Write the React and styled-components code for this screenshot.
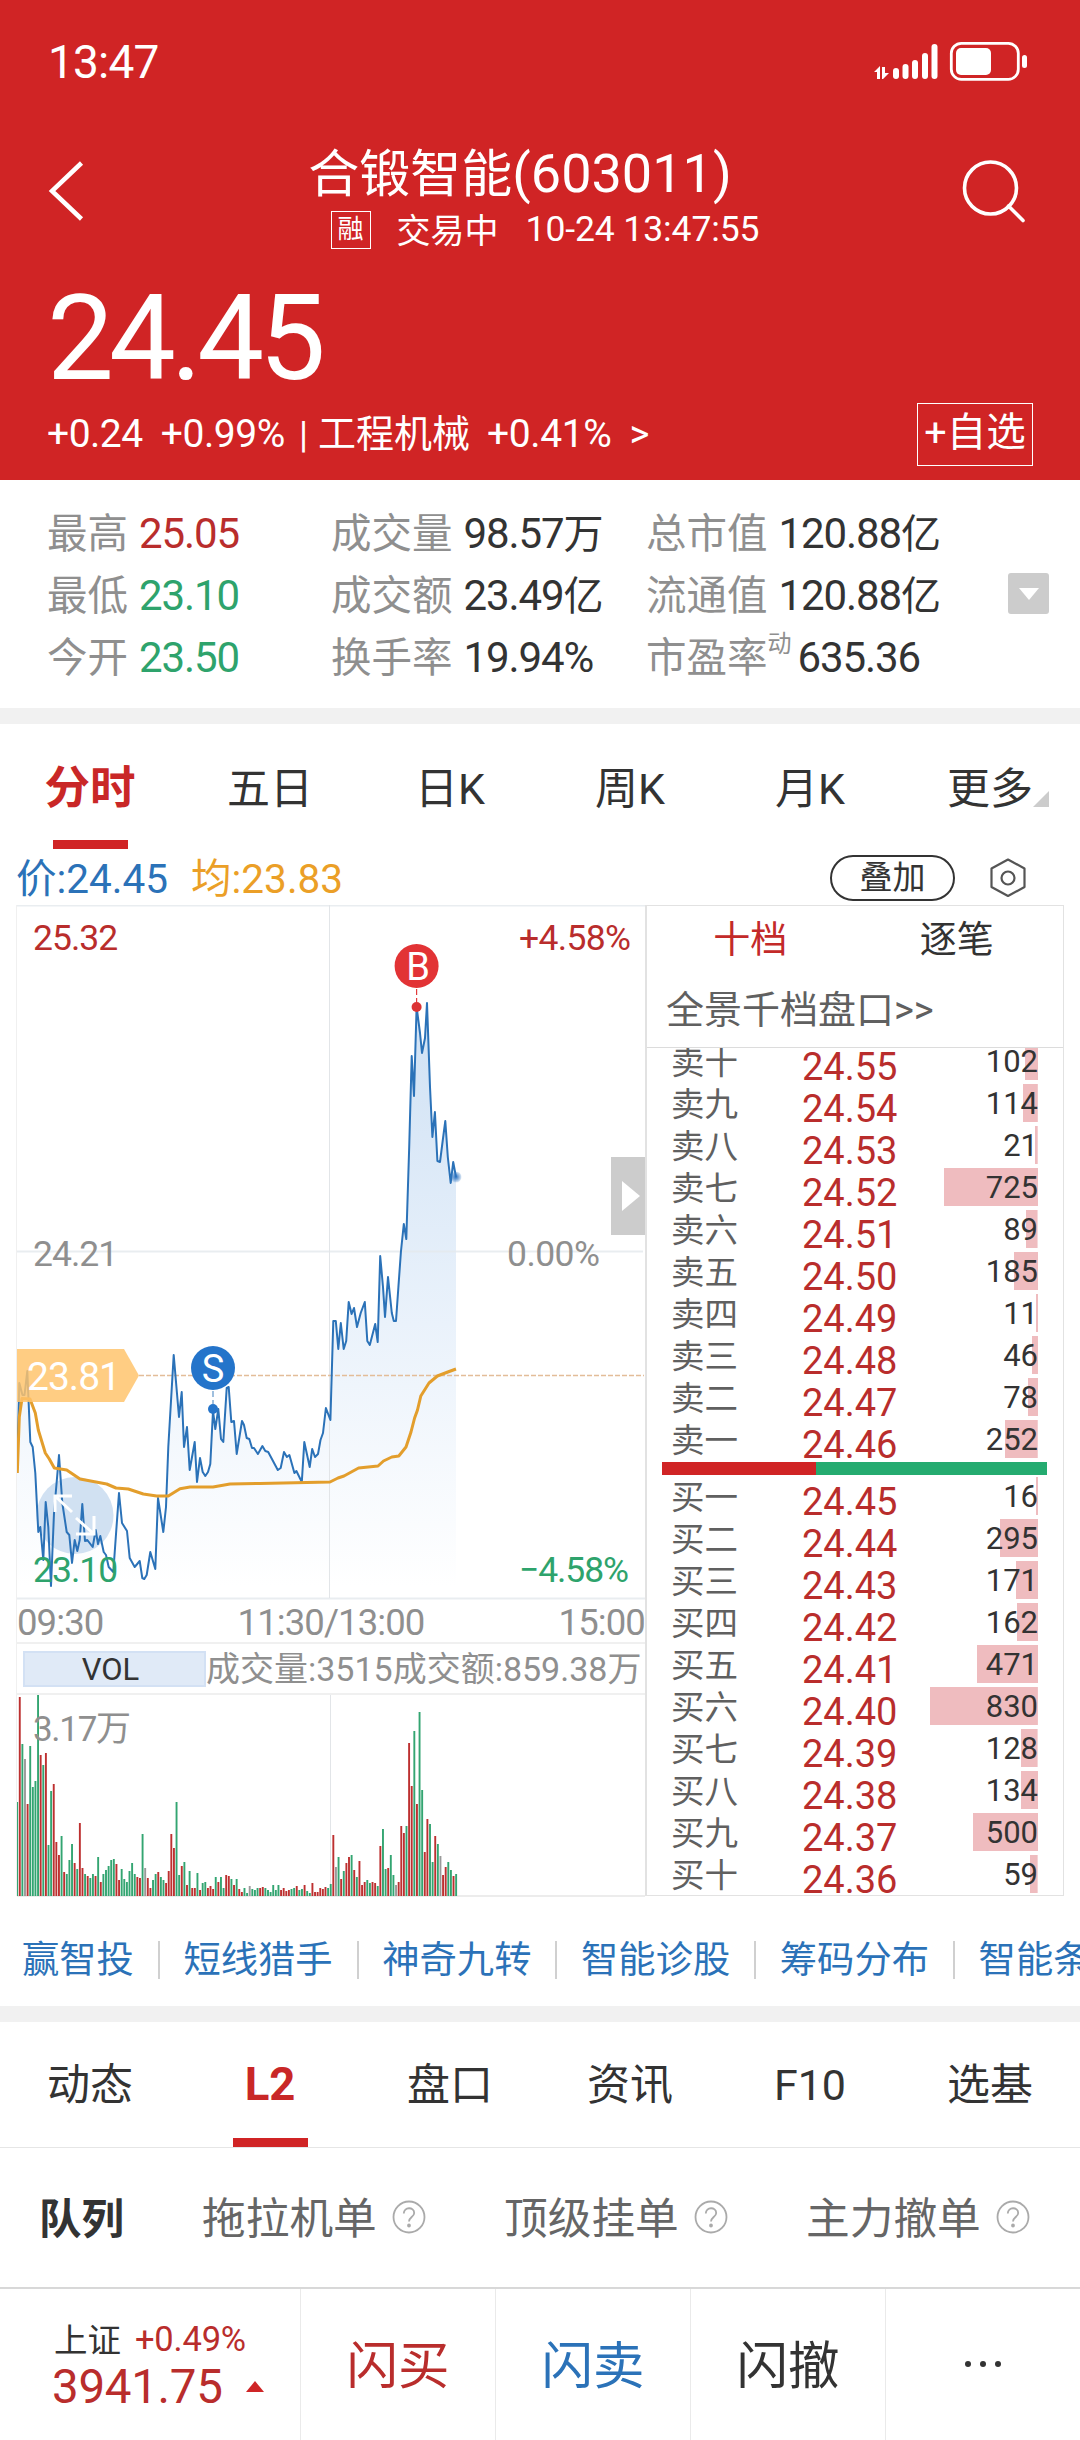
import React from "react";
import styled, { createGlobalStyle } from "styled-components";

const RED = "#d02425";
const TEXT_RED = "#b92d2c";
const GREEN = "#2ea36c";
const BLUE = "#2b72b8";
const GREY = "#8f8f8f";
const DARK = "#333333";

const GlobalStyle = createGlobalStyle`
  * {
    box-sizing: border-box;
  }
  body {
    margin: 0;
    background: #fff;
    font-family: Roboto, "Noto Sans CJK SC", sans-serif;
    color: ${DARK};
  }
  svg {
    display: block;
  }
`;

const Page = styled.div`
  width: 1080px;
  height: 2440px;
  overflow: hidden;
  background: #fff;
  white-space: nowrap;
`;

const Num = styled.span`
  font-size: ${(p) => p.$size}px;
  letter-spacing: ${(p) => p.$ls || 0}px;
  color: ${(p) => p.$color || "inherit"};
  margin-left: ${(p) => p.$ml || 0}px;
  padding-bottom: ${(p) => p.$lift || 0}px;
`;

/* ---------- header ---------- */

const Header = styled.header`
  height: 480px;
  background: ${RED};
  color: #fff;
  display: flex;
  flex-direction: column;
`;

const StatusBar = styled.div`
  height: 124px;
  padding: 0 52px 1px 48px;
  display: flex;
  align-items: center;
  justify-content: space-between;
`;

const Clock = styled.span`
  font-size: 46px;
  letter-spacing: -0.8px;
`;

const TitleBar = styled.div`
  height: 138px;
  padding: 11px 54px 0 48px;
  display: flex;
  justify-content: space-between;
  align-items: flex-start;
`;

const TitleBlock = styled.div`
  display: flex;
  flex-direction: column;
  align-items: center;
  padding-right: 6px;
`;

const Title = styled.div`
  height: 72px;
  line-height: 77px;
  font-size: 51px;
`;

const SubTitle = styled.div`
  height: 46px;
  display: flex;
  align-items: center;
  padding-left: 50px;
`;

const MarginTag = styled.span`
  width: 40px;
  height: 38px;
  border: 1px solid #fff;
  font-size: 26px;
  line-height: 34px;
  text-align: center;
`;

const IconSlot = styled.div`
  padding-top: ${(p) => p.$top}px;
`;

const BigPrice = styled.div`
  height: 138px;
  line-height: 154px;
  padding-left: 47px;
  font-size: 119px;
  letter-spacing: -5px;
`;

const ChangeRow = styled.div`
  height: 68px;
  padding: 0 47px 0 47px;
  display: flex;
  align-items: center;
  justify-content: space-between;
`;

const ChangeText = styled.div`
  display: flex;
  align-items: center;
  font-size: 38px;
`;

const AddButton = styled.div`
  width: 116px;
  height: 63px;
  border: 1px solid #fff;
  font-size: 39.5px;
  line-height: 58px;
  text-align: center;
`;

/* ---------- quote table ---------- */

const Quote = styled.section`
  height: 228px;
  padding: 22px 31px 18px 47px;
  display: flex;
  align-items: flex-start;
`;

const QuoteColumn = styled.div`
  width: ${(p) => p.$w}px;
`;

const QuoteRow = styled.div`
  height: 62px;
  display: flex;
  align-items: center;
  font-size: 40px;
  color: ${DARK};
`;

const QuoteLabel = styled.span`
  color: ${GREY};
  font-size: 40.5px;
  margin-right: 11px;
  padding-bottom: 5px;
`;

const Sup = styled.sup`
  font-size: 24px;
  line-height: 0;
  vertical-align: 20px;
  margin-right: -5px;
`;

const Unit = styled.span`
  padding-bottom: 4px;
`;

const Expand = styled.div`
  width: 41px;
  height: 41px;
  border-radius: 3px;
  background: #ccc;
  margin: 71px 0 0 auto;
  display: flex;
  align-items: center;
  justify-content: center;
`;

const Gap = styled.div`
  height: 16px;
  background: #f1f1f1;
`;

/* ---------- tabs ---------- */

const Tabs = styled.nav`
  height: ${(p) => p.$h}px;
  display: grid;
  grid-template-columns: repeat(6, 180px);
  border-bottom: ${(p) => (p.$line ? "1px solid #e6e6e6" : "none")};
`;

const Tab = styled.div`
  display: flex;
  flex-direction: column;
  align-items: center;
  justify-content: space-between;
  padding-top: ${(p) => p.$top}px;
  font-size: ${(p) => (p.$active ? 45.5 : 43)}px;
  line-height: 60px;
  font-weight: ${(p) => (p.$active ? 700 : 400)};
  color: ${(p) => (p.$active ? "#c92727" : DARK)};

  &::after {
    content: "";
    width: 75px;
    height: 9px;
    background: ${(p) => (p.$active ? RED : "transparent")};
  }
`;

const MoreLabel = styled.span`
  position: relative;
`;

const MoreCorner = styled.svg`
  position: absolute;
  right: -16px;
  bottom: 12px;
`;

/* ---------- chart area ---------- */

const InfoRow = styled.div`
  height: 56px;
  padding: 2px 54px 0 16px;
  display: flex;
  align-items: center;
  font-size: 40.5px;
  color: ${BLUE};
`;

const Current = styled.span`
  padding-bottom: 5px;
`;

const Average = styled.span`
  color: #eb9f27;
  margin-left: 23px;
  padding-bottom: 5px;
`;

const Overlay = styled.div`
  width: 125px;
  height: 46px;
  margin: 0 35px 0 auto;
  border: 2px solid ${DARK};
  border-radius: 23px;
  font-size: 33px;
  line-height: 41px;
  text-align: center;
  color: ${DARK};
`;

const Board = styled.section`
  height: 991px;
  padding: 0 15px 0 16px;
  display: flex;
`;

const ChartSide = styled.div`
  width: 629px;
  border-left: 1px solid #f0f0f0;
`;

const Axis = styled.div`
  height: 44px;
  display: flex;
  justify-content: space-between;
  align-items: center;
  font-size: 36.5px;
  letter-spacing: -0.9px;
  color: ${GREY};
  padding-top: 3px;
  border-bottom: 2px solid #f0f0f0;
`;

const VolumeHead = styled.div`
  height: 51px;
  padding: 0 0 0 6px;
  display: flex;
  align-items: center;
  border-bottom: 2px solid #f0f0f0;
  font-size: 34px;
  color: ${GREY};
`;

const VolTag = styled.div`
  width: 183px;
  height: 36px;
  flex: none;
  background: #e0eaf7;
  border: 2px solid #d3e1f4;
  font-size: 31px;
  line-height: 33px;
  text-align: center;
  color: ${DARK};
  padding-right: 8px;
`;

const VolumeText = styled.span`
  padding-bottom: 4px;
`;

/* ---------- order book ---------- */

const Book = styled.div`
  width: 419px;
  height: 991px;
  border: 1px solid #e2e2e2;
  border-width: 1px 1px 1px 2px;
  overflow: hidden;
`;

const BookTabs = styled.div`
  height: 70px;
  padding-right: 3px;
  display: grid;
  grid-template-columns: 1fr 1fr;
  text-align: center;
  font-size: 37px;
  line-height: 70px;
`;

const BookTab = styled.span`
  color: ${(p) => (p.$active ? "#c32a29" : DARK)};
`;

const Panorama = styled.div`
  height: 72px;
  padding-left: 19px;
  font-size: 38px;
  line-height: 68px;
  color: #606060;
  border-bottom: 1px solid #dcdcdc;
`;

const Ladder = styled.div`
  height: ${(p) => p.$h}px;
  overflow: hidden;
  display: flex;
  flex-direction: column;
  justify-content: ${(p) => (p.$toEnd ? "flex-end" : "flex-start")};
  padding-top: ${(p) => (p.$toEnd ? 0 : 2)}px;
`;

const Level = styled.div`
  height: 42px;
  flex: none;
  padding: 0 25px 0 24px;
  display: grid;
  grid-template-columns: 131px 110px 1fr;
  grid-template-rows: 42px;
  align-items: start;
`;

const LevelName = styled.span`
  font-size: 33.5px;
  line-height: 42px;
  color: #606060;
`;

const LevelPrice = styled.span`
  font-size: 38px;
  line-height: 51px;
  color: ${TEXT_RED};
`;

const LevelVolume = styled.span`
  height: 38px;
  text-align: right;
  font-size: 31px;
  line-height: 39px;
  background: linear-gradient(#efbcbf, #efbcbf) no-repeat right top;
`;

const Ratio = styled.div`
  height: 13px;
  margin: 0 16px 0 15px;
  background: linear-gradient(90deg, ${RED} 40%, #25ab70 40%);
`;

/* ---------- lower part ---------- */

const Links = styled.div`
  height: 110px;
  padding: 18px 0 0 22px;
  display: flex;
  align-items: center;
  overflow: hidden;
  font-size: 37.3px;
  color: ${BLUE};
`;

const Link = styled.span`
  flex: none;
  line-height: 38px;
  padding-right: 24px;
  margin-right: 23.6px;
  border-right: 2px solid #d0d0d0;
`;

const SubTabs = styled.div`
  height: 139px;
  padding: 0 0 5px 39px;
  display: flex;
  align-items: center;
`;

const SubTab = styled.div`
  display: flex;
  align-items: center;
  width: ${(p) => p.$w}px;
  flex: none;
  font-weight: ${(p) => (p.$active ? 700 : 400)};
  font-size: ${(p) => (p.$active ? 42.5 : 43.7)}px;
  color: ${(p) => (p.$active ? DARK : "#666")};

  svg {
    margin: 4px 0 0 15px;
  }
`;

const Footer = styled.footer`
  height: 153px;
  border-top: 2px solid #d8d8d8;
  display: grid;
  grid-template-columns: 301px repeat(3, 195px) 1fr;
`;

const FooterCell = styled.div`
  display: flex;
  align-items: center;
  justify-content: center;
  padding-bottom: 7px;
  font-size: 51.5px;
  color: ${(p) => p.$color};
  border-right: 1px solid #eaeaea;

  &:last-child {
    border-right: none;
  }

  svg {
    margin-top: 6px;
  }
`;

const IndexCell = styled.div`
  padding: 26px 0 0 52px;
  border-right: 1px solid #eaeaea;
`;

const IndexRow = styled.div`
  height: 48px;
  display: flex;
  align-items: center;
  font-size: 33.5px;
`;

const IndexName = styled.span`
  padding: 0 0 3px 2px;
`;

/* price line, one vertex per minute or turning point */
const PRICE =
  "17,1473 19.3,1383 22.5,1395 24.5,1395 27.3,1371 30.3,1442 32.7,1447 35.3,1473 38.3,1532 40.3,1527 43.3,1560 45.7,1502 48.3,1527 51,1586 54,1513 59,1455 62.3,1503 66.7,1532 69.3,1535 72,1563 74.7,1540 77.3,1551 79.7,1540 82.3,1504 85,1541 87.3,1540 92.7,1547 95.7,1530 98,1544 100.3,1536 103.7,1552 106,1555 108.7,1567 113.3,1572 116.3,1530 119,1493 122,1523 127,1531 129.7,1558 134.7,1567 139.7,1561 142.3,1578 144.3,1579 146.7,1575 150.3,1552 155.3,1569 158,1498 163.3,1532 166,1507 168.3,1447 173.7,1355 179,1417 181.7,1392 184,1447 187,1427 189.7,1470 194.7,1442 197,1482 200,1458 202.7,1472 205.3,1476 208,1472 210.3,1464 213,1411 215.3,1429 218.3,1409 221,1439 223.3,1442 226.7,1388 228.7,1387 231.3,1422 234,1421 236.7,1454 242,1421 244,1425 246.7,1438 249.3,1439 252,1448 254,1448 257.9,1454 262.4,1446 265.3,1451 268.2,1452 277.8,1470 280.7,1468 284,1452 286.9,1457 289.4,1455 294.4,1473 296.4,1471 301.8,1482 304.3,1442 309.7,1467 312.2,1449 315,1457 318,1454 320.5,1440 323,1433 325.9,1408 330.4,1420 333.3,1321 335.8,1321 338.3,1349 340.8,1323 343.7,1349 346.2,1341 348.7,1302 351.6,1314 354,1308 357,1327 360.7,1313 364.8,1302 367.3,1341 369.8,1345 375.2,1324 377.7,1342 380.2,1256 383,1287 385,1317 388,1277 391.8,1313 393.8,1321 396,1321 398.4,1287 400.9,1252 403.8,1224 406.3,1239 409.2,1147 411.7,1056 414,1096 416.6,1007 420,1033 422,1053 425,1038 427,1003 430,1087 432.4,1137 434.9,1112 437.4,1161 440,1162 442.8,1140 445.3,1121 447.8,1157 450.7,1183 453.2,1162 456,1177";

const AVERAGE =
  "17.3,1473 19.3,1417 22,1398.5 30,1399 35.3,1413 38.3,1430 45.3,1453 49.3,1459 54.3,1468 66.7,1470 80,1479 106.7,1484 116,1488 128.3,1489 143.3,1494 156.7,1496 168.3,1496 180,1488.7 190,1487 213,1487 230,1484 260,1483.5 330,1482 338,1478 344,1476 358.6,1468 378,1466 383.5,1461 391.8,1457 398.8,1456 406,1447 411,1432 414.6,1418 417.5,1410 420.8,1396 429,1383 437.4,1376 447.8,1372 456,1369";

/* bar height + colour: r up, g down, n flat */
const VOLUMES =
  "94g 199r 152g 137n 92r 150g 109g 115g 202g 141r 131g 143r 51g 105g 112r 54r 41r 60g 24r 22g 36g 52g 33r 27g 73r 28r 22g 20r 18g 22g 20r 39g 14r 22g 26g 30g 36g 37g 32r 16r 27g 17g 14g 25g 33g 22g 19r 18r 62g 28n 18r 8r 16g 22g 24r 19g 16g 13r 25r 62r 48r 94g 21g 30r 34g 11r 25g 8r 8r 23g 6r 13g 14g 8r 10r 7r 19g 14r 19g 8g 21r 20r 17g 11r 17g 7r 4r 8g 3g 10n 7g 6g 8g 8r 9r 8g 6g 4g 11g 6g 11g 6r 8r 5r 6r 7g 8g 10r 6g 7g 11r 5g 3g 13r 4r 4r 8r 7r 9r 8g 12g 61r 29n 39g 17r 25g 33r 39r 41g 26r 19g 35r 11r 14r 16g 13g 14r 13r 10g 50r 67g 27g 28r 41g 21g 11n 14r 70r 63r 70g 153r 110r 165g 92r 184g 106g 44r 77r 72g 34g 60r 52g 40n 21r 29r 34g 26g 20r 22g".split(
    " "
  );

const BAR_COLORS = { r: "#bd3030", g: "#33a571", n: "#9a9a9a" };

const quote = [
  [284, [["最高", "25.05", TEXT_RED], ["最低", "23.10", GREEN], ["今开", "23.50", GREEN]]],
  [315, [["成交量", "98.57", DARK, "万"], ["成交额", "23.49", DARK, "亿"], ["换手率", "19.94%", DARK]]],
  [320, [["总市值", "120.88", DARK, "亿"], ["流通值", "120.88", DARK, "亿"], ["市盈率", "635.36", DARK]]],
];

const sells = [
  ["卖十", "24.55", 102],
  ["卖九", "24.54", 114],
  ["卖八", "24.53", 21],
  ["卖七", "24.52", 725],
  ["卖六", "24.51", 89],
  ["卖五", "24.50", 185],
  ["卖四", "24.49", 11],
  ["卖三", "24.48", 46],
  ["卖二", "24.47", 78],
  ["卖一", "24.46", 252],
];

const buys = [
  ["买一", "24.45", 16],
  ["买二", "24.44", 295],
  ["买三", "24.43", 171],
  ["买四", "24.42", 162],
  ["买五", "24.41", 471],
  ["买六", "24.40", 830],
  ["买七", "24.39", 128],
  ["买八", "24.38", 134],
  ["买九", "24.37", 500],
  ["买十", "24.36", 59],
];

const links = ["赢智投", "短线猎手", "神奇九转", "智能诊股", "筹码分布", "智能条件"];

const StatusIcons = () => (
  <svg width="155" height="42" viewBox="874 40 155 42">
    <path d="M875 71l6-6v13h-3v-7zM883 66h3v6h4l-6 6h-1z" fill="#fff" />
    {[[894, 67], [903.5, 63], [913, 59], [923, 52], [932.5, 43]].map(([x, y]) => (
      <rect key={x} x={x} y={y} width="6" height={78 - y} rx="3" fill="#fff" />
    ))}
    <rect x="952.3" y="42.3" width="67" height="36" rx="10" fill="none" stroke="#fff" strokeWidth="2.8" />
    <rect x="957" y="47" width="35" height="27" rx="5" fill="#fff" />
    <rect x="1023" y="54" width="5" height="13" rx="2.5" fill="#fff" />
  </svg>
);

const PriceChart = () => (
  <svg width="628" height="695" viewBox="17 905 628 695">
    <defs>
      <linearGradient id="area" x1="0" y1="1003" x2="0" y2="1586" gradientUnits="userSpaceOnUse">
        <stop offset="0" stopColor="#cfe1f4" />
        <stop offset="0.55" stopColor="#eaf2fb" />
        <stop offset="1" stopColor="#ffffff" />
      </linearGradient>
      <radialGradient id="last">
        <stop offset="0" stopColor="#2b72c0" />
        <stop offset="1" stopColor="#2b72c0" stopOpacity="0.15" />
      </radialGradient>
    </defs>
    <polygon points={`17,1586 ${PRICE} 456,1586`} fill="url(#area)" />
    <path d="M17 905.5H645M17 1251.5H643M17 1598.5H645" stroke="#e4e8ec" strokeOpacity="0.8" strokeWidth="2" />
    <path d="M329.5 905V1598" stroke="#e2e5e8" />
    <path d="M139 1375.5H644" stroke="#e3bd98" strokeWidth="1.3" strokeDasharray="5 2" />
    <circle cx="75" cy="1515.5" r="38.5" fill="#cfdff1" fillOpacity="0.95" />
    <polyline points={PRICE} fill="none" stroke={BLUE} strokeWidth="2" strokeLinejoin="round" />
    <polyline points={AVERAGE} fill="none" stroke="#e39e2c" strokeWidth="3" strokeLinejoin="round" />
    <path d="M72 1512L55 1496M72 1496H55V1512M76 1518L94 1534M76 1534H94V1516" fill="none" stroke="#fff" strokeWidth="3" />
    <path d="M17 1349H124L139 1375.5L124 1402H17z" fill="#ffc46b" fillOpacity="0.84" />
    <circle cx="456" cy="1177" r="5.5" fill="url(#last)" />
    <path d="M213 1391V1404" stroke={BLUE} strokeOpacity="0.6" strokeWidth="1.5" strokeDasharray="6 3" />
    <circle cx="213" cy="1409" r="5" fill="#2474ca" />
    <circle cx="213" cy="1368" r="22" fill="#2474ca" />
    <path d="M416.6 989V1003" stroke="#e23a3a" strokeWidth="1.2" strokeDasharray="6 3" />
    <circle cx="416.6" cy="1007" r="5" fill="#dc3335" />
    <circle cx="416.6" cy="966" r="22" fill="#e23335" />
    <g fill="#fff" fontSize="38" textAnchor="middle">
      <text x="418" y="980">B</text>
      <text x="213" y="1382">S</text>
    </g>
    <text x="27" y="1390" fill="#fff" fontSize="39" textLength="94">23.81</text>
    <g fontSize="35.5" letterSpacing="-1">
      <g fill={TEXT_RED}>
        <text x="33" y="949.5">25.32</text>
        <text x="519" y="949.5" textLength="111">+4.58%</text>
      </g>
      <g fill={GREY}>
        <text x="33" y="1266">24.21</text>
        <text x="507" y="1266" textLength="92">0.00%</text>
      </g>
      <g fill={GREEN}>
        <text x="33" y="1582">23.10</text>
        <text x="519" y="1582" textLength="109">−4.58%</text>
      </g>
    </g>
    <path d="M611 1157H645V1235H611z" fill="#ccc" />
    <path d="M622 1181L640 1196L622 1211z" fill="#fff" />
  </svg>
);

const VolumeChart = () => (
  <svg width="628" height="202" viewBox="17 1694 628 202">
    <path d="M330.5 1694V1895" stroke="#e2e5e8" />
    <path d="M17 1895H645" stroke="#ececec" strokeWidth="2" />
    {VOLUMES.map((v, i) => {
      const h = parseInt(v, 10);
      return (
        <rect key={i} x={16.2 + i * 2.613} y={1895 - h} width="1.9" height={h} fill={BAR_COLORS[v.slice(-1)]} />
      );
    })}
    <text x="33" y="1739.5" fontSize="35" fill={GREY} textLength="98">3.17万</text>
  </svg>
);

const Help = () => (
  <svg width="34" height="34" viewBox="0 0 34 34" fill="none" stroke="#aaa" strokeWidth="1.8">
    <circle cx="17" cy="17" r="15.5" />
    <path d="M11.8 13.5c0-7 10.4-6.8 10.4-.6 0 4-5.2 4.3-5.2 8.6" />
    <circle cx="17" cy="25.5" r="1" fill="#aaa" />
  </svg>
);

const Levels = ({ rows }) =>
  rows.map(([name, price, volume]) => (
    <Level key={name}>
      <LevelName>{name}</LevelName>
      <LevelPrice>{price}</LevelPrice>
      <LevelVolume style={{ backgroundSize: `${Math.max(2, volume * 0.13)}px 100%` }}>
        {volume}
      </LevelVolume>
    </Level>
  ));

const App = () => (
  <Page>
    <GlobalStyle />
    <Header>
      <StatusBar>
        <Clock>13:47</Clock>
        <StatusIcons />
      </StatusBar>
      <TitleBar>
        <IconSlot $top={26}>
          <svg width="36" height="60" viewBox="0 0 36 60" fill="none" stroke="#fff" strokeWidth="4.5">
            <path d="M33.5 2L4 30L33.5 58" />
          </svg>
        </IconSlot>
        <TitleBlock>
          <Title>
            合锻智能<Num $size={54}>(603011)</Num>
          </Title>
          <SubTitle>
            <MarginTag>融</MarginTag>
            <Num $size={34} $ml={26} $lift={4}>交易中</Num>
            <Num $size={35.5} $ls={-0.1} $ml={27} $lift={2}>10-24 13:47:55</Num>
          </SubTitle>
        </TitleBlock>
        <IconSlot $top={24}>
          <svg width="64" height="64" viewBox="0 0 64 64" fill="none" stroke="#fff" strokeWidth="3.6" strokeLinecap="round">
            <circle cx="28.5" cy="29" r="26" />
            <path d="M46.5 47L61 61.5" />
          </svg>
        </IconSlot>
      </TitleBar>
      <BigPrice>24.45</BigPrice>
      <ChangeRow>
        <ChangeText>
          <Num $size={39} $ls={-0.5}>+0.24</Num>
          <Num $size={39} $ls={-0.4} $ml={18}>+0.99%</Num>
          <Num $size={37} $ml={14}>|</Num>
          <Num $size={38} $ml={10} $lift={7}>工程机械</Num>
          <Num $size={39} $ls={-0.4} $ml={17}>+0.41%</Num>
          <Num $size={38} $ml={18}>&gt;</Num>
        </ChangeText>
        <AddButton>+自选</AddButton>
      </ChangeRow>
    </Header>

    <Quote>
      {quote.map(([width, rows]) => (
        <QuoteColumn key={width} $w={width}>
          {rows.map(([label, value, color, unit]) => (
            <QuoteRow key={label}>
              <QuoteLabel>
                {label}
                {label === "市盈率" && <Sup>动</Sup>}
              </QuoteLabel>
              <Num $size={42} $ls={-1.1} $color={color}>{value}</Num>
              {unit && <Unit>{unit}</Unit>}
            </QuoteRow>
          ))}
        </QuoteColumn>
      ))}
      <Expand>
        <svg width="20" height="12" viewBox="0 0 20 12">
          <path d="M0 0H20L10 12z" fill="#fff" />
        </svg>
      </Expand>
    </Quote>
    <Gap />

    <Tabs $h={125}>
      <Tab $top={35} $active>分时</Tab>
      <Tab $top={35}>五日</Tab>
      <Tab $top={35}>日K</Tab>
      <Tab $top={35}>周K</Tab>
      <Tab $top={35}>月K</Tab>
      <Tab $top={35}>
        <MoreLabel>
          更多
          <MoreCorner width="16" height="16" viewBox="0 0 16 16">
            <path d="M16 0V16H0z" fill="#ccc" />
          </MoreCorner>
        </MoreLabel>
      </Tab>
    </Tabs>

    <InfoRow>
      <Current>价:24.45</Current>
      <Average>均:23.83</Average>
      <Overlay>叠加</Overlay>
      <svg width="36" height="40" viewBox="0 0 36 40" fill="none" stroke="#555" strokeWidth="2.2">
        <path d="M18 1.5L34.5 10.5V29L18 38L1.5 29V10.5z" strokeLinejoin="round" />
        <circle cx="18" cy="20" r="6.5" />
      </svg>
    </InfoRow>

    <Board>
      <ChartSide>
        <PriceChart />
        <Axis>
          <span>09:30</span>
          <span>11:30/13:00</span>
          <span>15:00</span>
        </Axis>
        <VolumeHead>
          <VolTag>VOL</VolTag>
          <VolumeText>成交量:3515成交额:859.38万</VolumeText>
        </VolumeHead>
        <VolumeChart />
      </ChartSide>
      <Book>
        <BookTabs>
          <BookTab $active>十档</BookTab>
          <BookTab>逐笔</BookTab>
        </BookTabs>
        <Panorama>全景千档盘口&gt;&gt;</Panorama>
        <Ladder $h={414} $toEnd>
          <Levels rows={sells} />
        </Ladder>
        <Ratio />
        <Ladder $h={420}>
          <Levels rows={buys} />
        </Ladder>
      </Book>
    </Board>

    <Links>
      {links.map((name) => (
        <Link key={name}>{name}</Link>
      ))}
    </Links>
    <Gap />

    <Tabs $h={126} $line>
      <Tab $top={33}>动态</Tab>
      <Tab $top={33} $active>L2</Tab>
      <Tab $top={33}>盘口</Tab>
      <Tab $top={33}>资讯</Tab>
      <Tab $top={33}>F10</Tab>
      <Tab $top={33}>选基</Tab>
    </Tabs>

    <SubTabs>
      <SubTab $w={163} $active>队列</SubTab>
      <SubTab $w={302}>拖拉机单<Help /></SubTab>
      <SubTab $w={302}>顶级挂单<Help /></SubTab>
      <SubTab $w={302}>主力撤单<Help /></SubTab>
    </SubTabs>

    <Footer>
      <IndexCell>
        <IndexRow>
          <IndexName>上证</IndexName>
          <Num $size={34.5} $ls={-0.2} $ml={14} $color={TEXT_RED}>+0.49%</Num>
        </IndexRow>
        <IndexRow>
          <Num $size={47.5} $ls={-0.3} $color={TEXT_RED}>3941.75</Num>
          <svg width="43" height="12" viewBox="0 0 43 12">
            <path d="M32 0L41 11H23z" fill="#cf2526" />
          </svg>
        </IndexRow>
      </IndexCell>
      <FooterCell $color={TEXT_RED}>闪买</FooterCell>
      <FooterCell $color={BLUE}>闪卖</FooterCell>
      <FooterCell $color={DARK}>闪撤</FooterCell>
      <FooterCell $color={DARK}>
        <svg width="36" height="6" viewBox="0 0 36 6" fill={DARK}>
          <circle cx="3" cy="3" r="3" />
          <circle cx="18" cy="3" r="3" />
          <circle cx="33" cy="3" r="3" />
        </svg>
      </FooterCell>
    </Footer>
  </Page>
);

export default App;
